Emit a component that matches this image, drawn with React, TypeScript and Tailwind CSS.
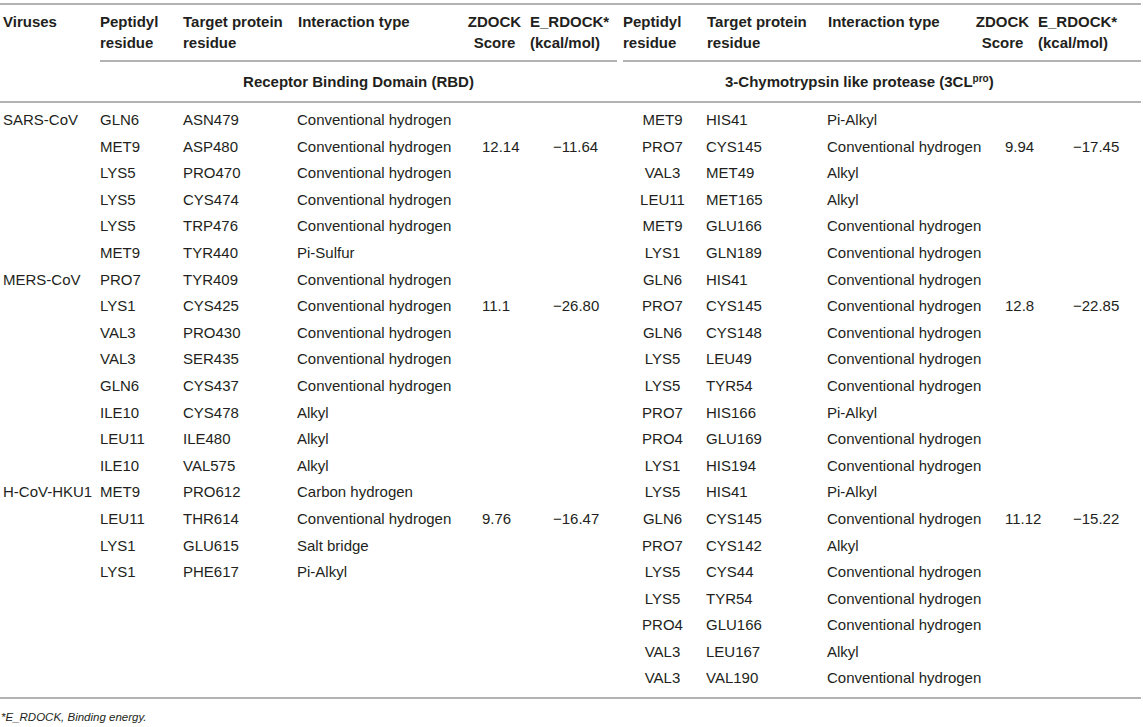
import React from 'react';

type Side = [string, string, string, string?, string?];

interface Row {
  virus?: string;
  left?: Side;
  right: Side;
}

const rows: Row[] = [
  { virus: 'SARS-CoV', left: ['GLN6', 'ASN479', 'Conventional hydrogen'], right: ['MET9', 'HIS41', 'Pi-Alkyl'] },
  { left: ['MET9', 'ASP480', 'Conventional hydrogen', '12.14', '\u221211.64'], right: ['PRO7', 'CYS145', 'Conventional hydrogen', '9.94', '\u221217.45'] },
  { left: ['LYS5', 'PRO470', 'Conventional hydrogen'], right: ['VAL3', 'MET49', 'Alkyl'] },
  { left: ['LYS5', 'CYS474', 'Conventional hydrogen'], right: ['LEU11', 'MET165', 'Alkyl'] },
  { left: ['LYS5', 'TRP476', 'Conventional hydrogen'], right: ['MET9', 'GLU166', 'Conventional hydrogen'] },
  { left: ['MET9', 'TYR440', 'Pi-Sulfur'], right: ['LYS1', 'GLN189', 'Conventional hydrogen'] },
  { virus: 'MERS-CoV', left: ['PRO7', 'TYR409', 'Conventional hydrogen'], right: ['GLN6', 'HIS41', 'Conventional hydrogen'] },
  { left: ['LYS1', 'CYS425', 'Conventional hydrogen', '11.1', '\u221226.80'], right: ['PRO7', 'CYS145', 'Conventional hydrogen', '12.8', '\u221222.85'] },
  { left: ['VAL3', 'PRO430', 'Conventional hydrogen'], right: ['GLN6', 'CYS148', 'Conventional hydrogen'] },
  { left: ['VAL3', 'SER435', 'Conventional hydrogen'], right: ['LYS5', 'LEU49', 'Conventional hydrogen'] },
  { left: ['GLN6', 'CYS437', 'Conventional hydrogen'], right: ['LYS5', 'TYR54', 'Conventional hydrogen'] },
  { left: ['ILE10', 'CYS478', 'Alkyl'], right: ['PRO7', 'HIS166', 'Pi-Alkyl'] },
  { left: ['LEU11', 'ILE480', 'Alkyl'], right: ['PRO4', 'GLU169', 'Conventional hydrogen'] },
  { left: ['ILE10', 'VAL575', 'Alkyl'], right: ['LYS1', 'HIS194', 'Conventional hydrogen'] },
  { virus: 'H-CoV-HKU1', left: ['MET9', 'PRO612', 'Carbon hydrogen'], right: ['LYS5', 'HIS41', 'Pi-Alkyl'] },
  { left: ['LEU11', 'THR614', 'Conventional hydrogen', '9.76', '\u221216.47'], right: ['GLN6', 'CYS145', 'Conventional hydrogen', '11.12', '\u221215.22'] },
  { left: ['LYS1', 'GLU615', 'Salt bridge'], right: ['PRO7', 'CYS142', 'Alkyl'] },
  { left: ['LYS1', 'PHE617', 'Pi-Alkyl'], right: ['LYS5', 'CYS44', 'Conventional hydrogen'] },
  { right: ['LYS5', 'TYR54', 'Conventional hydrogen'] },
  { right: ['PRO4', 'GLU166', 'Conventional hydrogen'] },
  { right: ['VAL3', 'LEU167', 'Alkyl'] },
  { right: ['VAL3', 'VAL190', 'Conventional hydrogen'] },
];

const cols =
  'grid grid-cols-[100px_83px_114px_170px_61px_92px_85px_122px_148px_61px_1fr]';

function HeaderCell({ children, className = '' }: { children: React.ReactNode; className?: string }) {
  return <div className={`font-bold leading-[21px] ${className}`}>{children}</div>;
}

export default function App() {
  return (
    <div
      className="w-[1143px] bg-white pt-[3px] text-[15px] text-[#231f20]"
      style={{ fontFamily: '"Liberation Sans", Arial, sans-serif' }}
    >
      <div className="w-[1141px]">
        {/* column headers */}
        <div className={`${cols} border-t-2 border-[#b3b3b3] pt-[6px] pb-[7px]`}>
          <HeaderCell className="pl-[3px]">Viruses</HeaderCell>
          <HeaderCell>
            Peptidyl
            <br />
            residue
          </HeaderCell>
          <HeaderCell>
            Target protein
            <br />
            residue
          </HeaderCell>
          <HeaderCell className="pl-[1px]">Interaction type</HeaderCell>
          <HeaderCell className="pr-[6px] text-center">
            ZDOCK
            <br />
            Score
          </HeaderCell>
          <HeaderCell className="pl-[2px]">
            E_RDOCK*
            <br />
            (kcal/mol)
          </HeaderCell>
          <HeaderCell className="pl-[3px]">
            Peptidyl
            <br />
            residue
          </HeaderCell>
          <HeaderCell className="pl-[2px]">
            Target protein
            <br />
            residue
          </HeaderCell>
          <HeaderCell className="pl-[1px]">Interaction type</HeaderCell>
          <HeaderCell className="pr-[6px] text-center">
            ZDOCK
            <br />
            Score
          </HeaderCell>
          <HeaderCell className="pl-[2px]">
            E_RDOCK*
            <br />
            (kcal/mol)
          </HeaderCell>
        </div>

        {/* group titles */}
        <div className={`${cols} border-b-2 border-[#b3b3b3]`}>
          <div />
          <div className="col-span-5 mr-[3px] border-t-2 border-[#b3b3b3] pt-[9px] pb-[9px] text-center font-bold leading-[21px]">
            Receptor Binding Domain (RBD)
          </div>
          <div className="col-span-5 ml-[3px] border-t-2 border-[#b3b3b3] pt-[9px] pb-[9px] pl-[102px] font-bold leading-[21px]">
            3-Chymotrypsin like protease (3CL<sup className="text-[10px] leading-none">pro</sup>)
          </div>
        </div>

        {/* data rows */}
        <div className="border-b-2 border-[#b3b3b3] pt-[4px] pb-[5px]">
          {rows.map((r, i) => (
            <div key={i} className={`${cols} h-[26.6px] leading-[26.6px] whitespace-nowrap`}>
              <div className="pl-[3px]">{r.virus ?? ''}</div>
              <div>{r.left?.[0] ?? ''}</div>
              <div>{r.left?.[1] ?? ''}</div>
              <div>{r.left?.[2] ?? ''}</div>
              <div className="pl-[15px]">{r.left?.[3] ?? ''}</div>
              <div className="pl-[25px]">{r.left?.[4] ?? ''}</div>
              <div className="text-center">{r.right[0]}</div>
              <div className="pl-[1px]">{r.right[1]}</div>
              <div>{r.right[2]}</div>
              <div className="pl-[30px]">{r.right[3] ?? ''}</div>
              <div className="pl-[37px]">{r.right[4] ?? ''}</div>
            </div>
          ))}
        </div>

        <p className="mt-[10px] pl-[1px] text-[11.5px] italic leading-[16px]">*E_RDOCK, Binding energy.</p>
      </div>
    </div>
  );
}
